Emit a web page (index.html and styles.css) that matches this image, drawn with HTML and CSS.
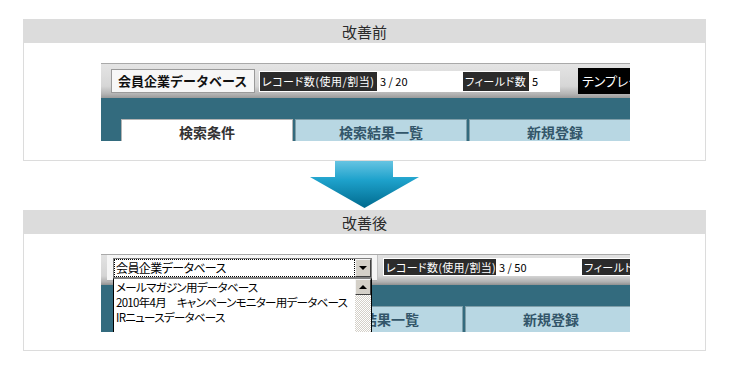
FILE: index.html
```html
<!DOCTYPE html>
<html>
	<head>
		<meta charset="utf-8" />
		<title>改善前・改善後</title>
		<link rel="stylesheet" href="styles.css">
	</head>
	<body>
<div class="page">
    <!-- 改善前 -->
    <section class="panel">
        <h2 class="panel-head">改善前</h2>
        <div class="panel-body">
            <div class="shot">
                <div class="toolbar">
                    <div class="db-name">会員企業データベース</div>
                    <div class="stats">
                        <span class="stat-label rec">レコード数(使用/割当)</span>
                        <span class="stat-value rec-val">3 / 20</span>
                        <span class="stat-label fld">フィールド数</span>
                        <span class="stat-value fld-val">5</span>
                    </div>
                    <div class="template">テンプレート</div>
                </div>
                <div class="tabbar">
                    <div class="tab current">検索条件</div>
                    <div class="tab">検索結果一覧</div>
                    <div class="tab">新規登録</div>
                </div>
            </div>
        </div>
    </section>

    <div class="arrow">
        <svg width="110" height="48" viewBox="0 0 110 48">
            <defs>
                <linearGradient id="arrowGrad" x1="0" y1="0" x2="0" y2="1">
                    <stop offset="0" stop-color="#66c4e2"/>
                    <stop offset="0.4" stop-color="#1ea2cc"/>
                    <stop offset="1" stop-color="#006a8e"/>
                </linearGradient>
            </defs>
            <polygon points="25,0 83,0 83,16 109,16 54.5,47 0,16 25,16" fill="url(#arrowGrad)"/>
        </svg>
    </div>

    <!-- 改善後 -->
    <section class="panel panel-after">
        <h2 class="panel-head">改善後</h2>
        <div class="panel-body">
            <div class="shot">
                <div class="toolbar toolbar-after">
                    <div class="combo-wrap">
                        <div class="combo">
                            <div class="combo-text">会員企業データベース</div>
                            <div class="combo-btn"><span class="tri-down"></span></div>
                        </div>
                    </div>
                    <div class="stats stats-after">
                        <span class="stat-label rec">レコード数(使用/割当)</span>
                        <span class="stat-value rec-val">3 / 50</span>
                        <span class="stat-label fld">フィールド数</span>
                    </div>
                </div>
                <div class="tabbar tabbar-after">
                    <div class="tab current">検索条件</div>
                    <div class="tab">検索結果一覧</div>
                    <div class="tab">新規登録</div>
                </div>
                <!-- 開いたプルダウン -->
                <div class="droplist">
                    <ul>
                        <li>メールマガジン用データベース</li>
                        <li>2010年4月　キャンペーンモニター用データベース</li>
                        <li>IRニュースデータベース</li>
                    </ul>
                    <div class="scroll">
                        <div class="scroll-up"><span class="tri-up"></span></div>
                    </div>
                </div>
            </div>
        </div>
    </section>
</div>
	</body>
</html>
```

FILE: styles.css
```css
* {
    margin: 0;
    padding: 0;
    box-sizing: border-box;
}
body {
    font-family: "Noto Sans CJK JP", "Liberation Sans", sans-serif;
    color: #333;
    background: #fff;
}
.page {
    padding: 19px 0 0 23px;
}
.panel {
    width: 683px;
    border: 1px solid #dcdcdc;
}
.panel-head {
    height: 23px;
    line-height: 23px;
    background: #dcdcdc;
    text-align: center;
    font-size: 15px;
    font-weight: normal;
    color: #2a2a2a;
}
.panel-body {
    padding: 20px 0 19px 77px;
}
.panel-after .panel-body {
    padding-bottom: 18px;
}
.shot {
    width: 529px;
    height: 78px;
    position: relative;
    overflow: hidden;
}
.arrow {
    width: 683px;
    height: 49px;
    display: flex;
    justify-content: center;
}
.arrow svg {
    display: block;
}

/* ツールバー */
.toolbar {
    display: flex;
    align-items: center;
    height: 35px;
    padding-left: 10px;
    border-top: 1px solid #a9a9a9;
    background: linear-gradient(#e4e4e4, #d6d6d6 65%, #b4b4b4 88%, #9a9a9a);
    white-space: nowrap;
}
.db-name {
    flex-shrink: 0;
    width: 144px;
    height: 24px;
    line-height: 22px;
    border: 1px solid #9a9a9a;
    background: #f7f7f7;
    font-size: 13px;
    font-weight: bold;
    color: #111;
    padding-left: 6px;
}
.stats {
    flex-shrink: 0;
    display: flex;
    width: 301px;
    height: 21px;
    margin-left: 4px;
    padding: 1px;
    background: #fff;
}
.stats span {
    flex-shrink: 0;
}
.stat-label {
    background: #2b2b2b;
    color: #fff;
    font-size: 11px;
    line-height: 19px;
    padding-left: 2px;
    font-feature-settings: "palt";
    overflow: hidden;
}
.stat-value {
    color: #000;
    font-size: 11px;
    line-height: 19px;
    padding-left: 3px;
}
.rec {
    width: 117px;
    letter-spacing: 0.5px;
}
.rec-val { width: 86px; }
.fld {
    width: 66px;
    letter-spacing: 0.5px;
}
.fld-val { width: 30px; }
.template {
    flex-shrink: 0;
    margin-left: 18px;
    height: 26px;
    line-height: 26px;
    padding: 0 6px 0 4px;
    background: #000;
    color: #fff;
    font-size: 13px;
    font-feature-settings: "palt";
}

/* タブ */
.tabbar {
    display: flex;
    gap: 2px;
    height: 43px;
    padding: 21px 0 0 20px;
    background: #336b7e;
}
.tab {
    flex-shrink: 0;
    width: 172px;
    height: 30px;
    border: 1px solid #7f9ea9;
    border-bottom: none;
    background: #b8d7e3;
    color: #33566a;
    font-size: 14px;
    font-weight: bold;
    line-height: 20px;
    padding-top: 2px;
    text-align: center;
}
.tab.current {
    background: #fff;
    border-color: #b4b4b4;
    color: #333;
}

/* 改善後 */
.toolbar-after {
    height: 31px;
    align-items: flex-start;
    padding-left: 6px;
    background: linear-gradient(#e2e2e2, #d4d4d4 70%, #b0b0b0 90%, #909090);
}
.combo-wrap {
    flex-shrink: 0;
    width: 271px;
    height: 26px;
    padding: 3px 0 0 6px;
    background: #f5f5f5;
    border-right: 1px solid #c2c2c2;
    border-bottom: 1px solid #b2b2b2;
}
.combo {
    display: flex;
    width: 259px;
    height: 20px;
    border: 1px solid #808080;
    background: #fff;
}
.combo-text {
    flex: 1;
    border: 1px dotted #000;
    font-size: 12px;
    letter-spacing: -0.6px;
    line-height: 16px;
    color: #000;
    padding-left: 1px;
    font-feature-settings: "palt";
}
.combo-btn {
    width: 16px;
    height: 18px;
    background: #d4d0c8;
    border: 1px solid;
    border-color: #f4f4f4 #404040 #404040 #f4f4f4;
    display: flex;
    align-items: center;
    justify-content: center;
}
.tri-down {
    border-left: 4px solid transparent;
    border-right: 4px solid transparent;
    border-top: 4px solid #000;
}
.tri-up {
    border-left: 4px solid transparent;
    border-right: 4px solid transparent;
    border-bottom: 4px solid #000;
}
.stats-after {
    width: 260px;
    height: 18px;
    margin: 3px 0 0 5px;
}
.stats-after .stat-label,
.stats-after .stat-value {
    line-height: 16px;
}
.stats-after .rec {
    width: 112px;
    letter-spacing: 0.3px;
}
.tabbar-after {
    height: 47px;
    padding-left: 16px;
}

/* 開いたリスト */
.droplist {
    position: absolute;
    left: 12px;
    top: 24px;
    width: 259px;
    height: 70px;
    background: #fff;
    border: 1px solid #000;
    border-top-color: #808080;
}
.droplist ul {
    list-style: none;
    padding: 1px 0 0 2px;
}
.droplist li {
    font-size: 11.5px;
    letter-spacing: -0.7px;
    line-height: 15px;
    color: #000;
    white-space: nowrap;
    font-feature-settings: "palt";
}
.scroll {
    position: absolute;
    top: 0;
    right: 0;
    bottom: 0;
    width: 16px;
    background: repeating-conic-gradient(#d4d0c8 0 25%, #fff 0 50%) 0 0 / 2px 2px;
}
.scroll-up {
    width: 16px;
    height: 16px;
    background: #d4d0c8;
    border: 1px solid;
    border-color: #f4f4f4 #404040 #404040 #f4f4f4;
    display: flex;
    align-items: center;
    justify-content: center;
}
```
